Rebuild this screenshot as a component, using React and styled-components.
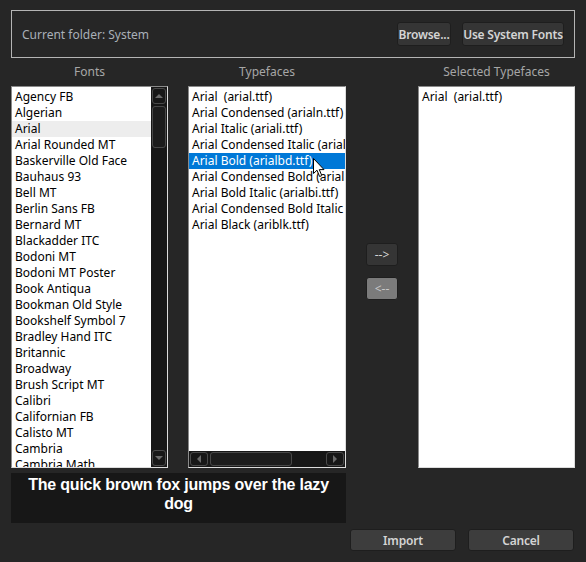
import React from "react";
import styled, { createGlobalStyle } from "styled-components";

const GlobalStyle = createGlobalStyle`
  html, body {
    margin: 0;
    padding: 0;
    background: #262626;
  }
  body {
    font-family: "Noto Sans", "Open Sans", sans-serif;
    font-size: 12px;
  }
`;

const Window = styled.div`
  width: 586px;
  height: 562px;
  box-sizing: border-box;
  padding: 10px 11px 0 11px;
  background: #262626;
  display: flex;
  flex-direction: column;
`;

const FolderBox = styled.div`
  height: 48px;
  box-sizing: border-box;
  border: 1px solid #b4b4b4;
  display: flex;
  align-items: center;
  padding: 0 10px;
  gap: 11px;
`;

const FolderLabel = styled.div`
  flex: 1;
  color: #a9b0b8;
  font-size: 12px;
  padding-top: 1px;
`;

const Button = styled.button`
  height: ${(p) => p.h || 24}px;
  width: ${(p) => p.w}px;
  box-sizing: border-box;
  border: 1px solid #1e1e1e;
  border-radius: 3px;
  background: ${(p) => (p.disabled ? "#7b7b7b" : p.bg || "#353535")};
  color: ${(p) => (p.disabled ? "#c8c8c8" : "#d4d4d4")};
  font-family: "Noto Sans", sans-serif;
  font-size: 12px;
  font-weight: ${(p) => (p.plain ? 400 : 600)};
  letter-spacing: ${(p) => (p.plain ? 0 : -0.2)}px;
  white-space: nowrap;
  padding: 0;
  display: flex;
  align-items: center;
  justify-content: center;
`;

const Columns = styled.div`
  display: grid;
  grid-template-columns: 157px 20px 158px 72px 157px;
  grid-template-rows: 28px 382px;
`;

const ColLabel = styled.div`
  grid-column: ${(p) => p.col};
  color: #a6a6a6;
  font-size: 12px;
  text-align: center;
  align-self: end;
  padding-bottom: 6px;
`;

const ListBox = styled.div`
  grid-column: ${(p) => p.col};
  grid-row: 2;
  position: relative;
  box-sizing: border-box;
  background: #ffffff;
  border: 1px solid;
  border-color: #8a8a8a #dcdcdc #dcdcdc #8a8a8a;
  display: flex;
  overflow: hidden;
`;

const ListBody = styled.div`
  flex: 1;
  min-width: 0;
  display: flex;
  flex-direction: column;
  padding-top: 2px;
  overflow: hidden;
`;

const Items = styled.div`
  flex: 1;
  overflow: hidden;
`;

const Item = styled.div`
  height: 16px;
  line-height: 16px;
  padding-left: 3px;
  color: ${(p) => (p.selected ? "#ffffff" : "#000000")};
  background: ${(p) =>
    p.selected ? "#0078d7" : p.hover ? "#ededed" : "transparent"};
  white-space: pre;
  overflow: hidden;
  font-size: 12px;
`;

const VScroll = styled.div`
  width: 14px;
  background: #171717;
  display: flex;
  flex-direction: column;
  padding: 1px 1px;
  gap: 2px;
`;

const HScroll = styled.div`
  height: 14px;
  background: #171717;
  display: flex;
  padding: 1px 1px;
  gap: 2px;
`;

const ScrollBtn = styled.div`
  box-sizing: border-box;
  width: ${(p) => (p.horiz ? "18px" : "100%")};
  height: ${(p) => (p.horiz ? "100%" : "16px")};
  border: 1px solid #4a4a4a;
  border-radius: 3px;
  display: flex;
  align-items: center;
  justify-content: center;
`;

const Thumb = styled.div`
  box-sizing: border-box;
  border: 1px solid #484848;
  border-radius: 3px;
  background: #1c1c1c;
  ${(p) => (p.horiz ? `width: ${p.size}px;` : `height: ${p.size}px;`)}
`;

const Spacer = styled.div`
  flex: 1;
`;

const Arrow = styled.div`
  width: 0;
  height: 0;
  border: 4px solid transparent;
  ${(p) => p.dir === "up" && "border-bottom: 4px solid #6a6a6a; border-top-width: 0;"}
  ${(p) => p.dir === "down" && "border-top: 4px solid #6a6a6a; border-bottom-width: 0;"}
  ${(p) => p.dir === "left" && "border-right: 4px solid #6a6a6a; border-left-width: 0;"}
  ${(p) => p.dir === "right" && "border-left: 4px solid #6a6a6a; border-right-width: 0;"}
`;

const Middle = styled.div`
  grid-column: 4;
  grid-row: 2;
  display: flex;
  flex-direction: column;
  align-items: center;
  padding-top: 157px;
  gap: 11px;
`;

const Cursor = styled.svg`
  position: absolute;
  left: 124px;
  top: 71px;
`;

const Preview = styled.div`
  width: 335px;
  height: 50px;
  margin-top: 5px;
  background: #171717;
  color: #ffffff;
  font-family: "Liberation Sans", Arial, sans-serif;
  font-weight: 700;
  font-size: 16px;
  letter-spacing: -0.2px;
  line-height: 19px;
  text-align: center;
  padding: 2px 4px 0;
  box-sizing: border-box;
`;

const Footer = styled.div`
  display: flex;
  justify-content: flex-end;
  gap: 12px;
  margin-top: 6px;
  padding-right: 1px;
`;

const fonts = [
  "Agency FB",
  "Algerian",
  "Arial",
  "Arial Rounded MT",
  "Baskerville Old Face",
  "Bauhaus 93",
  "Bell MT",
  "Berlin Sans FB",
  "Bernard MT",
  "Blackadder ITC",
  "Bodoni MT",
  "Bodoni MT Poster",
  "Book Antiqua",
  "Bookman Old Style",
  "Bookshelf Symbol 7",
  "Bradley Hand ITC",
  "Britannic",
  "Broadway",
  "Brush Script MT",
  "Calibri",
  "Californian FB",
  "Calisto MT",
  "Cambria",
  "Cambria Math",
  "Candara",
];

const typefaces = [
  "Arial  (arial.ttf)",
  "Arial Condensed (arialn.ttf)",
  "Arial Italic (ariali.ttf)",
  "Arial Condensed Italic (arialni.ttf)",
  "Arial Bold (arialbd.ttf)",
  "Arial Condensed Bold (arialnb.ttf)",
  "Arial Bold Italic (arialbi.ttf)",
  "Arial Condensed Bold Italic (arialnbi.ttf)",
  "Arial Black (ariblk.ttf)",
];

function App() {
  return (
    <Window>
      <GlobalStyle />
      <FolderBox>
        <FolderLabel>Current folder: System</FolderLabel>
        <Button w={54}>Browse...</Button>
        <Button w={102}>Use System Fonts</Button>
      </FolderBox>

      <Columns>
        <ColLabel col={1}>Fonts</ColLabel>
        <ColLabel col={3}>Typefaces</ColLabel>
        <ColLabel col={5}>Selected Typefaces</ColLabel>

        <ListBox col={1}>
          <ListBody>
            <Items>
              {fonts.map((f) => (
                <Item key={f} hover={f === "Arial"}>
                  {f}
                </Item>
              ))}
            </Items>
          </ListBody>
          <VScroll>
            <ScrollBtn>
              <Arrow dir="up" />
            </ScrollBtn>
            <Thumb size={42} />
            <Spacer />
            <ScrollBtn>
              <Arrow dir="down" />
            </ScrollBtn>
          </VScroll>
        </ListBox>

        <ListBox col={3}>
          <ListBody>
            <Items>
              {typefaces.map((t) => (
                <Item key={t} selected={t.startsWith("Arial Bold (")}>
                  {t}
                </Item>
              ))}
            </Items>
            <HScroll>
              <ScrollBtn horiz>
                <Arrow dir="left" />
              </ScrollBtn>
              <Thumb horiz size={82} />
              <Spacer />
              <ScrollBtn horiz>
                <Arrow dir="right" />
              </ScrollBtn>
            </HScroll>
          </ListBody>
          <Cursor width="13" height="20" viewBox="0 0 13 20">
            <path
              d="M0.5 0.5 L0.5 15.5 L4 12.2 L6.6 18.5 L8.8 17.6 L6.3 11.6 L11 11.6 Z"
              fill="#ffffff"
              stroke="#000000"
              strokeWidth="1"
              strokeLinejoin="miter"
            />
          </Cursor>
        </ListBox>

        <Middle>
          <Button w={32} h={23} plain>
            --&gt;
          </Button>
          <Button w={32} h={23} plain disabled>
            &lt;--
          </Button>
        </Middle>

        <ListBox col={5}>
          <ListBody>
            <Items>
              <Item>{"Arial  (arial.ttf)"}</Item>
            </Items>
          </ListBody>
        </ListBox>
      </Columns>

      <Preview>The quick brown fox jumps over the lazy dog</Preview>

      <Footer>
        <Button w={106} h={22} bg="#3d3d3d">
          Import
        </Button>
        <Button w={106} h={22} bg="#3d3d3d">
          Cancel
        </Button>
      </Footer>
    </Window>
  );
}

export default App;
